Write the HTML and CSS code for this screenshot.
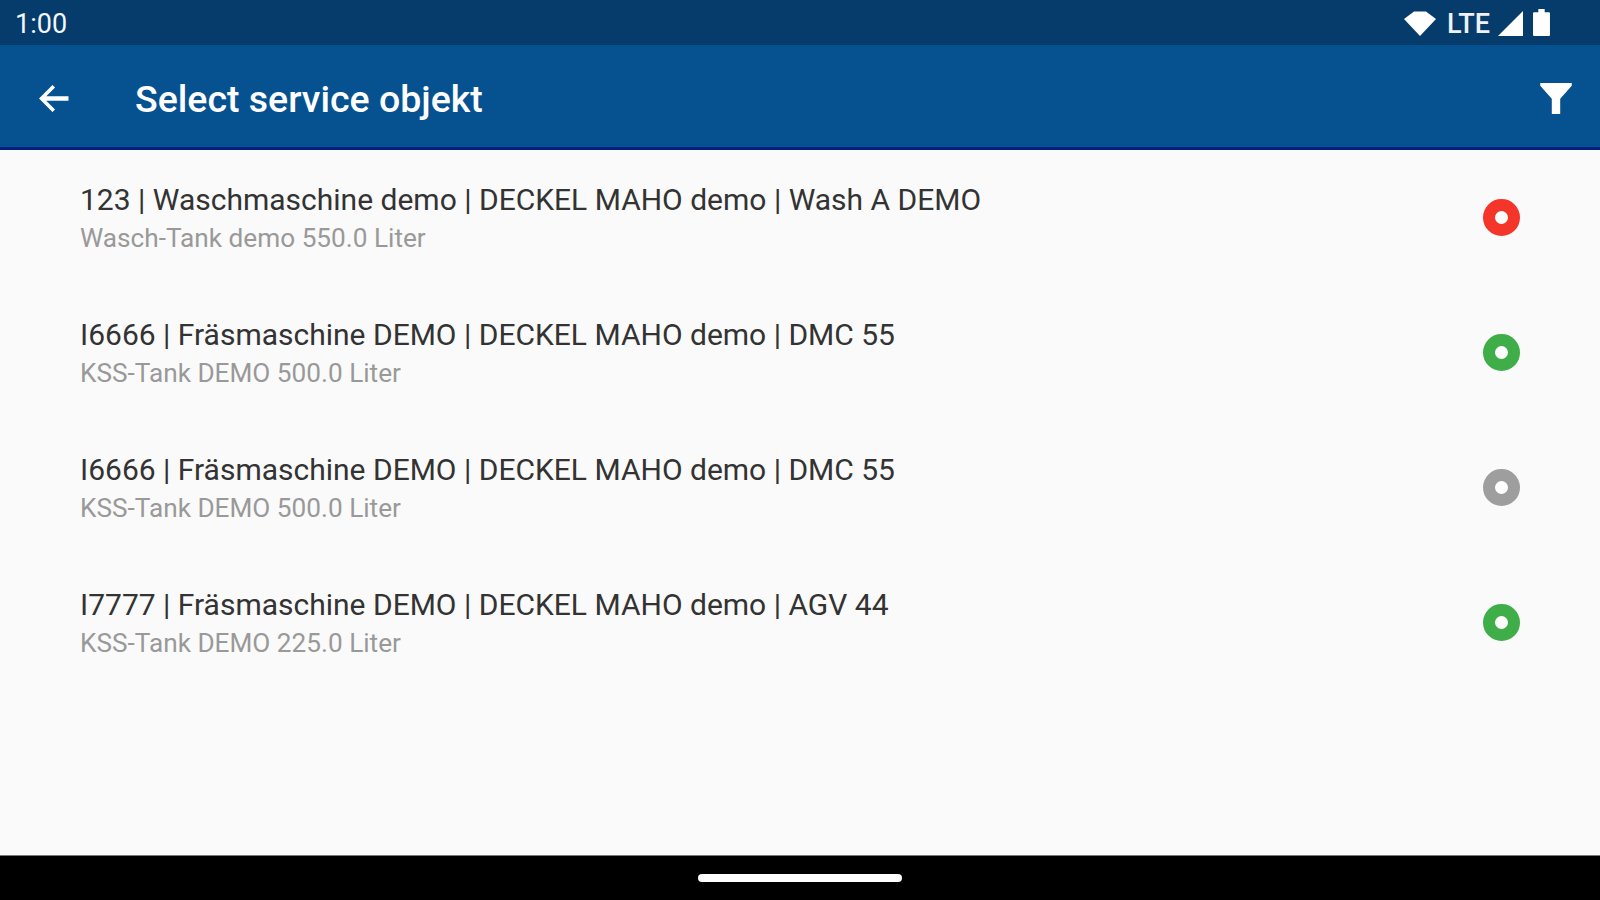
FILE: index.html
```html
<!DOCTYPE html>
<html lang="en">
<head>
  <meta charset="UTF-8">
  <title>Select service objekt</title>
  <link rel="stylesheet" href="styles.css">
</head>
<body>

  <!-- Status bar -->
  <div class="status-bar">
    <span class="clock">1:00</span>
    <div class="status-icons">
      <svg class="icon-wifi" width="32" height="25" viewBox="0 0 32 25"><path d="M0 8 10 .5H22L32 8 16 25Z" fill="#fff"/></svg>
      <span class="lte">LTE</span>
      <svg class="icon-signal" width="25" height="25" viewBox="1 1 22.500 22.500"><path d="M1 23.500 23.500 1V23.500Z" fill="#fff"/></svg>
      <svg class="icon-battery" width="17" height="27" viewBox="1 0 16 25.500"><path d="M6 0H12V3H16Q17 3 17 4V24.500Q17 25.500 16 25.500H2Q1 25.500 1 24.500V4Q1 3 2 3H6Z" fill="#fff"/></svg>
    </div>
  </div>

  <!-- App bar -->
  <header class="app-bar">
    <svg class="icon-back" width="31" height="31" viewBox="3.500 3.500 30 29"><path d="M33 15.800H11.500L20 7.300 17.500 5 4.500 18 17.500 31 20 28.700 11.500 20.200H33Z" fill="#fff"/></svg>
    <h1 class="title">Select service objekt</h1>
    <svg class="icon-filter" width="32" height="31" viewBox="2 2 30 29.500"><path d="M2 2H32V4.500L21 17V31.500H13V17L2 4.500Z" fill="#fff"/></svg>
  </header>

  <!-- Objects -->
  <main class="object-list">
    <div class="object-row">
      <div class="object-text">
        <div class="object-name">123 | Waschmaschine demo | DECKEL MAHO demo | Wash A DEMO</div>
        <div class="object-tank">Wasch-Tank demo 550.0 Liter</div>
      </div>
      <span class="status-dot red"></span>
    </div>
    <div class="object-row">
      <div class="object-text">
        <div class="object-name">I6666 | Fräsmaschine DEMO | DECKEL MAHO demo | DMC 55</div>
        <div class="object-tank">KSS-Tank DEMO 500.0 Liter</div>
      </div>
      <span class="status-dot green"></span>
    </div>
    <div class="object-row">
      <div class="object-text">
        <div class="object-name">I6666 | Fräsmaschine DEMO | DECKEL MAHO demo | DMC 55</div>
        <div class="object-tank">KSS-Tank DEMO 500.0 Liter</div>
      </div>
      <span class="status-dot grey"></span>
    </div>
    <div class="object-row">
      <div class="object-text">
        <div class="object-name">I7777 | Fräsmaschine DEMO | DECKEL MAHO demo | AGV 44</div>
        <div class="object-tank">KSS-Tank DEMO 225.0 Liter</div>
      </div>
      <span class="status-dot green"></span>
    </div>
  </main>

  <!-- Navigation bar -->
  <footer class="nav-bar">
    <span class="home-pill"></span>
  </footer>

</body>
</html>
```
FILE: styles.css
```css
* {
  margin: 0;
  padding: 0;
  box-sizing: border-box;
}

html, body {
  height: 100%;
  overflow: hidden;
}

body {
  font-family: Roboto, sans-serif;
  background: #fafafa;
  display: flex;
  flex-direction: column;
}

.status-bar {
  height: 45px;
  flex: none;
  background: #063c6c;
  color: #fff;
  display: flex;
  align-items: center;
  justify-content: space-between;
  padding: 0 50px 0 15px;
}

.clock {
  font-size: 27px;
  margin-top: 2px;
  color: #f4f6f8;
}

.status-icons {
  display: flex;
  align-items: center;
  margin-top: 1px;
}

.lte {
  font-size: 27px;
  font-weight: 500;
  color: #f0f2f6;
  margin-left: 11px;
  margin-top: 1px;
}

.icon-signal {
  margin-left: 8px;
}

.icon-battery {
  margin-left: 10px;
  margin-top: -2px;
}

.app-bar {
  height: 105px;
  flex: none;
  background: #065291;
  border-bottom: 3px solid #03207f;
  display: flex;
  align-items: center;
  padding: 0 28px 0 38px;
}

.icon-back,
.icon-filter {
  margin-top: 4px;
}

.title {
  font-size: 37.500px;
  font-weight: 500;
  color: #fff;
  margin-left: 66px;
  margin-top: 6px;
  flex: 1;
}

.object-list {
  flex: 1;
  padding-top: 2px;
}

.object-row {
  height: 135px;
  display: flex;
  align-items: center;
  justify-content: space-between;
  padding: 0 80px 0 80px;
}

.object-text {
  margin-top: -2px;
}

.object-name {
  font-size: 30px;
  color: #333;
  line-height: 38px;
}

.object-tank {
  font-size: 26.200px;
  color: #999;
  line-height: 38px;
}

.status-dot {
  width: 37px;
  height: 37px;
  margin-top: -4px;
  border-radius: 50%;
  border: 12px solid;
  background: #fff;
}

.status-dot.red { border-color: #f4352a; }
.status-dot.green { border-color: #3fae49; }
.status-dot.grey { border-color: #9e9e9e; }

.nav-bar {
  height: 45px;
  flex: none;
  background: #000;
  border-top: 1px solid #777;
  display: flex;
  align-items: center;
  justify-content: center;
}

.home-pill {
  width: 204px;
  height: 8px;
  border-radius: 4px;
  background: #fff;
}
```
